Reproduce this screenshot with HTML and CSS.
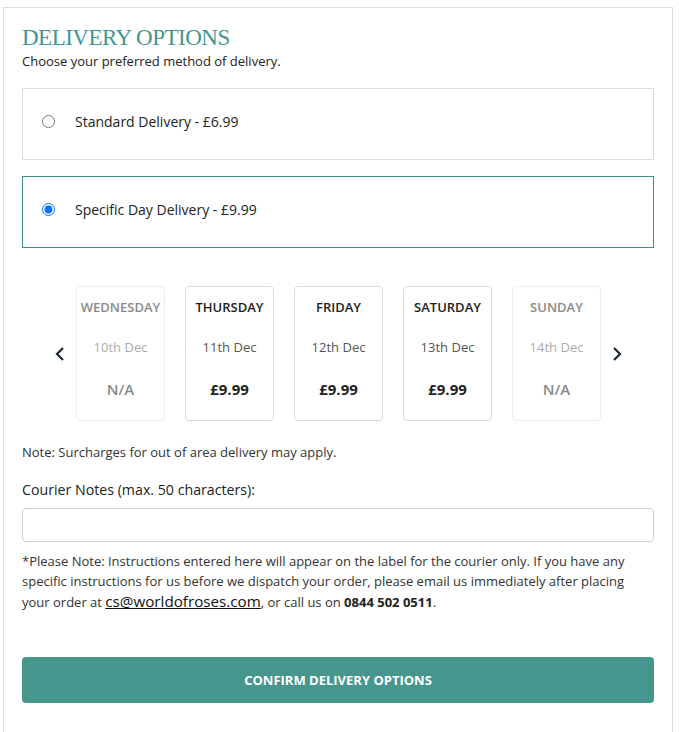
FILE: index.html
```html
<!DOCTYPE html>
<html lang="en">
<head>
<meta charset="utf-8">
<title>Delivery Options</title>
<link rel="stylesheet" href="styles.css">
</head>
<body>
<div class="panel">
  <h1 class="title">DELIVERY OPTIONS</h1>
  <p class="subtitle">Choose your preferred method of delivery.</p>

  <label class="option">
    <input type="radio" name="delivery" class="radio">
    <span>Standard Delivery - £6.99</span>
  </label>
  <label class="option option-selected">
    <input type="radio" name="delivery" class="radio" checked>
    <span>Specific Day Delivery - £9.99</span>
  </label>

  <div class="days">
    <span class="chev">
      <svg width="10" height="16" viewBox="0 0 10 16"><polyline points="8,2 2,8 8,14" fill="none" stroke="#1b2733" stroke-width="2.2"/></svg>
    </span>
    <div class="cards">
      <div class="card card-off">
        <div class="day">WEDNESDAY</div>
        <div class="date">10th Dec</div>
        <div class="price">N/A</div>
      </div>
      <div class="card">
        <div class="day">THURSDAY</div>
        <div class="date">11th Dec</div>
        <div class="price">£9.99</div>
      </div>
      <div class="card">
        <div class="day">FRIDAY</div>
        <div class="date">12th Dec</div>
        <div class="price">£9.99</div>
      </div>
      <div class="card">
        <div class="day">SATURDAY</div>
        <div class="date">13th Dec</div>
        <div class="price">£9.99</div>
      </div>
      <div class="card card-off">
        <div class="day">SUNDAY</div>
        <div class="date">14th Dec</div>
        <div class="price">N/A</div>
      </div>
    </div>
    <span class="chev">
      <svg width="10" height="16" viewBox="0 0 10 16"><polyline points="2,2 8,8 2,14" fill="none" stroke="#1b2733" stroke-width="2.2"/></svg>
    </span>
  </div>

  <p class="note">Note: Surcharges for out of area delivery may apply.</p>

  <label class="notes-label" for="notes">Courier Notes (max. 50 characters):</label>
  <input id="notes" class="notes-input" type="text" maxlength="50">

  <p class="fine">*Please Note: Instructions entered here will appear on the label for the courier only. If you have any<br>specific instructions for us before we dispatch your order, please email us immediately after placing<br>your order at <a class="mail" href="#">cs@worldofroses.com</a>, or call us on <b class="phone">0844 502 0511</b>.</p>

  <button class="confirm" type="button">CONFIRM DELIVERY OPTIONS</button>
</div>
</body>
</html>
```

FILE: styles.css
```css
html, body {
  margin: 0;
  padding: 0;
  background: #ffffff;
}

body {
  font-family: "Open Sans", "Noto Sans", sans-serif;
  color: #222;
}

.panel {
  box-sizing: border-box;
  width: 670px;
  min-height: 760px;
  margin: 7px 0 0 3px;
  padding: 17px 18px 40px 18px;
  border: 1px solid #dedede;
  border-bottom: none;
}

.title {
  margin: 0;
  font-family: "Liberation Serif", "Times New Roman", serif;
  font-weight: normal;
  font-size: 23px;
  line-height: 26px;
  color: #3f9790;
  letter-spacing: -0.5px;
}

.subtitle {
  margin: 1px 0 0 0;
  font-size: 13px;
  line-height: 18px;
  color: #222;
}

.option {
  display: flex;
  align-items: center;
  box-sizing: border-box;
  height: 72px;
  margin-top: 18px;
  padding-left: 19px;
  padding-bottom: 5px;
  border: 1px solid #dcdcdc;
  font-size: 14px;
  color: #222;
  cursor: pointer;
}

.option + .option {
  margin-top: 16px;
}

.option-selected {
  border-color: #3d8f87;
}

.radio {
  width: 13px;
  height: 13px;
  margin: 0 20px 1px 0;
}

.days {
  display: flex;
  align-items: center;
  justify-content: center;
  gap: 10px;
  margin-top: 38px;
  padding-left: 1px;
}

.chev {
  display: flex;
  width: 12px;
  justify-content: center;
}

.cards {
  display: flex;
  gap: 20px;
}

.card {
  box-sizing: border-box;
  width: 89px;
  height: 135px;
  padding-top: 11px;
  border: 1px solid #dadada;
  border-radius: 4px;
  text-align: center;
}

.day {
  font-size: 13px;
  line-height: 18px;
  font-weight: 600;
  color: #1e1e1e;
}

.date {
  margin-top: 22px;
  font-size: 13px;
  line-height: 18px;
  color: #555;
}

.price {
  margin-top: 23px;
  font-size: 15px;
  line-height: 20px;
  font-weight: 700;
  color: #222;
}

.card-off {
  border-color: #ececec;
}

.card-off .day {
  color: #8a8a8a;
}

.card-off .date {
  color: #ababab;
}

.card-off .price {
  color: #8a8a8a;
  font-weight: 600;
}

.note {
  margin: 22px 0 0 0;
  font-size: 13px;
  line-height: 18px;
  color: #333;
}

.notes-label {
  display: block;
  margin-top: 19px;
  font-size: 14.2px;
  line-height: 20px;
  color: #222;
}

.notes-input {
  display: block;
  box-sizing: border-box;
  width: 100%;
  height: 34px;
  margin-top: 8px;
  border: 1px solid #cfcfcf;
  border-radius: 4px;
  background: #fff;
  font-family: inherit;
  font-size: 14px;
}

.fine {
  margin: 9px 0 0 0;
  font-size: 13px;
  line-height: 20px;
  color: #333;
  white-space: nowrap;
}

.mail {
  font-size: 15.2px;
  color: #111;
  text-decoration: underline;
  line-height: 20px;
}

.phone {
  font-weight: 700;
  color: #222;
}

.confirm {
  display: block;
  width: 100%;
  height: 46px;
  margin-top: 45px;
  border: none;
  border-radius: 4px;
  background: #46968e;
  color: #ffffff;
  font-family: "Open Sans", "Noto Sans", sans-serif;
  font-size: 13px;
  font-weight: 700;
  letter-spacing: 0;
  cursor: pointer;
}
```
